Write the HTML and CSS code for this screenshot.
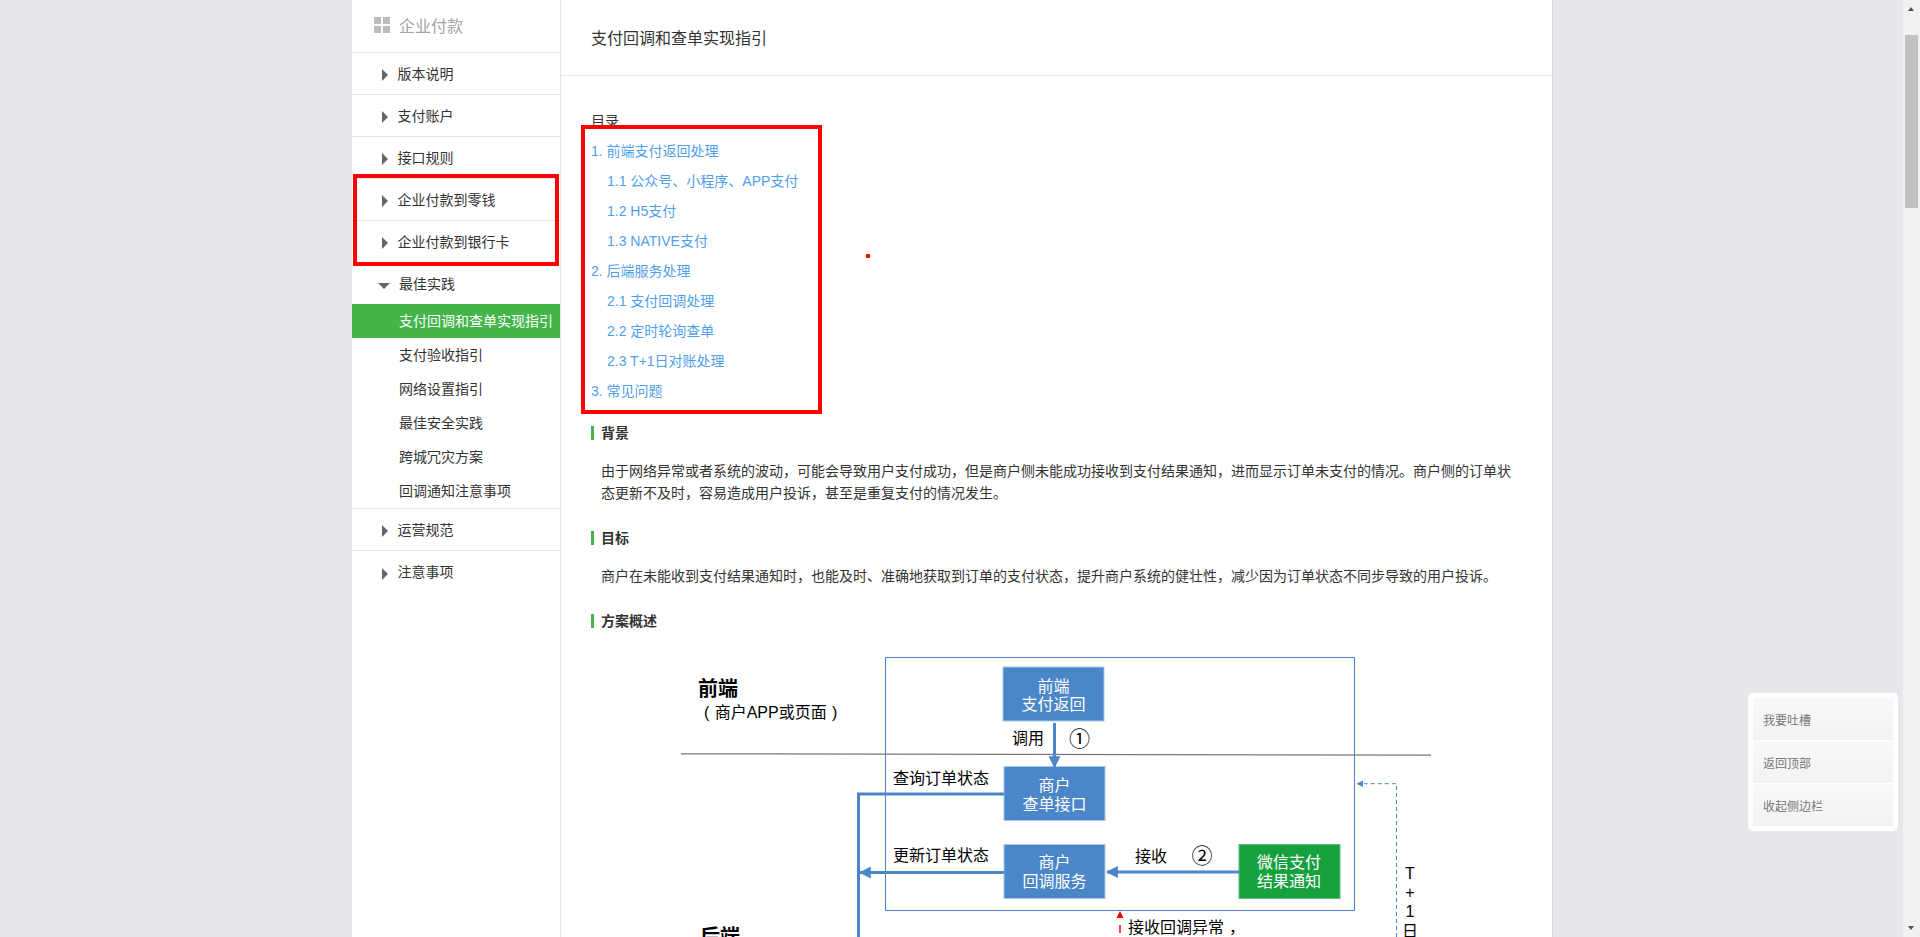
FILE: index.html
```html
<!DOCTYPE html>
<html lang="zh-CN">
<head>
<meta charset="utf-8">
<title>支付回调和查单实现指引</title>
<link rel="stylesheet" href="styles.css">
</head>
<body>
<div class="viewport">
  <div class="page">
    <aside class="side">
      <div class="side-head">
        <svg class="grid-icon" width="16" height="16" viewBox="0 0 16 16"><path d="M0 0h7v7H0zM9 0h7v7H9zM0 9h7v7H0zM9 9h7v7H9z"/></svg>
        <span>企业付款</span>
      </div>
      <div class="nav-item"><i class="tri-r"></i>版本说明</div>
      <div class="nav-item"><i class="tri-r"></i>支付账户</div>
      <div class="nav-item"><i class="tri-r"></i>接口规则</div>
      <div class="nav-item"><i class="tri-r"></i>企业付款到零钱</div>
      <div class="nav-item"><i class="tri-r"></i>企业付款到银行卡</div>
      <div class="nav-group">
        <div class="nav-open"><i class="tri-d"></i>最佳实践</div>
        <div class="sub active">支付回调和查单实现指引</div>
        <div class="sub">支付验收指引</div>
        <div class="sub">网络设置指引</div>
        <div class="sub">最佳安全实践</div>
        <div class="sub">跨城冗灾方案</div>
        <div class="sub">回调通知注意事项</div>
      </div>
      <div class="nav-item"><i class="tri-r"></i>运营规范</div>
      <div class="nav-item"><i class="tri-r"></i>注意事项</div>
    </aside>
    <main class="main">
      <h1 class="title">支付回调和查单实现指引</h1>
      <div class="body">
        <div class="toc-title">目录</div>
        <a class="toc">1. 前端支付返回处理</a>
        <a class="toc in">1.1 公众号、小程序、APP支付</a>
        <a class="toc in">1.2 H5支付</a>
        <a class="toc in">1.3 NATIVE支付</a>
        <a class="toc">2. 后端服务处理</a>
        <a class="toc in">2.1 支付回调处理</a>
        <a class="toc in">2.2 定时轮询查单</a>
        <a class="toc in">2.3 T+1日对账处理</a>
        <a class="toc">3. 常见问题</a>
        <h2 class="sec">背景</h2>
        <p class="para">由于网络异常或者系统的波动，可能会导致用户支付成功，但是商户侧未能成功接收到支付结果通知，进而显示订单未支付的情况。商户侧的订单状态更新不及时，容易造成用户投诉，甚至是重复支付的情况发生。</p>
        <h2 class="sec">目标</h2>
        <p class="para">商户在未能收到支付结果通知时，也能及时、准确地获取到订单的支付状态，提升商户系统的健壮性，减少因为订单状态不同步导致的用户投诉。</p>
        <h2 class="sec">方案概述</h2>
        <svg class="diagram" width="930" height="297" viewBox="591 640 930 297">
          <defs>
            <marker id="ah" markerWidth="4" markerHeight="4" refX="3.6" refY="2" orient="auto"><path d="M0 0L4 2L0 4z" fill="#4a86c8"/></marker>
          </defs>
          <rect class="outer" x="885.5" y="657.5" width="469" height="253"/>
          <path d="M681 753.8L1431 755.2" stroke="#777" stroke-width="1.2" fill="none"/>
          <rect class="box" x="1003" y="667" width="101" height="54"/>
          <rect class="box" x="1004" y="766.5" width="101" height="54"/>
          <rect class="box" x="1004" y="844.5" width="101" height="54"/>
          <rect class="box-g" x="1239" y="844.5" width="101" height="54"/>
          <path class="flow" d="M1054.5 723V767" marker-end="url(#ah)"/>
          <path class="flow" d="M1004 794H858.5V937"/>
          <path class="flow" d="M1004 872.5H860" marker-end="url(#ah)"/>
          <path class="flow" d="M1239 872H1107" marker-end="url(#ah)"/>
          <path d="M1120 911L1116.5 918H1123.5z" fill="#f00"/>
          <path d="M1120 925V933" stroke="#f00" stroke-width="1.5"/>
          <path d="M1396.5 937V783.7H1362" stroke="#4a86c8" stroke-width="1" stroke-dasharray="4 3" fill="none"/>
          <path d="M1356.5 783.7L1363 780.5V787z" fill="#4a86c8"/>
          <text class="t20" x="698" y="689">前端</text>
          <text class="t16" y="711.5"><tspan x="704">(</tspan><tspan x="714.7">商户APP或页面</tspan><tspan x="832">)</tspan></text>
          <text class="t20" x="700" y="937">后端</text>
          <text class="t16" x="1012" y="738">调用</text>
          <text class="t18" x="1079.5" y="738">①</text>
          <text class="t16" x="893" y="778">查询订单状态</text>
          <text class="t16" x="893" y="855">更新订单状态</text>
          <text class="t16" x="1135" y="856.5">接收</text>
          <text class="t18" x="1202" y="855">②</text>
          <text class="tw" x="1053.5" y="686">前端</text>
          <text class="tw" x="1053.5" y="704.5">支付返回</text>
          <text class="tw" x="1054.5" y="785">商户</text>
          <text class="tw" x="1054.5" y="804">查单接口</text>
          <text class="tw" x="1054.5" y="862.5">商户</text>
          <text class="tw" x="1054.5" y="881.5">回调服务</text>
          <text class="tw" x="1289" y="862.5">微信支付</text>
          <text class="tw" x="1289" y="881.5">结果通知</text>
          <text class="t16" x="1128" y="927">接收回调异常<tspan x="1229">，</tspan></text>
          <text class="tc" x="1410" y="873">T</text>
          <text class="tc" x="1410" y="892">+</text>
          <text class="tc" x="1410" y="911.5">1</text>
          <text class="tc" x="1410" y="931">日</text>
        </svg>
      </div>
    </main>
    <div class="mark mark-nav"></div>
    <div class="mark mark-toc"></div>
    <div class="dot"></div>
  </div>
  <div class="float">
    <div class="float-item">我要吐槽</div>
    <div class="float-item">返回顶部</div>
    <div class="float-item">收起侧边栏</div>
  </div>
</div>
<div class="sbar">
  <i class="sbar-up"></i>
  <i class="sbar-thumb"></i>
  <i class="sbar-down"></i>
</div>
</body>
</html>
```
FILE: styles.css
```css
* { box-sizing: border-box; }
html, body { margin: 0; height: 100%; overflow: hidden; }
body {
  display: flex;
  background: #e6e7eb;
  font-family: "Noto Sans CJK SC", "Liberation Sans", sans-serif;
  font-size: 14px;
  color: #333;
}
.viewport { position: relative; flex: 1; height: 937px; overflow: hidden; }
.page {
  position: relative;
  width: 1201px;
  height: 937px;
  margin-left: 352px;
  display: flex;
  background: #fff;
  border-right: 1px solid #d9dadc;
}
.side { width: 209px; flex: none; border-right: 1px solid #e4e6e9; }
.side-head {
  height: 53px;
  padding: 0 0 3px 22px;
  display: flex;
  align-items: center;
  gap: 9px;
  font-size: 16px;
  color: #a3a3a3;
  border-bottom: 1px solid #e7e7eb;
}
.grid-icon { fill: #bdbdbd; margin-top: 1px; }
.nav-item {
  height: 42px;
  display: flex;
  align-items: center;
  padding: 0 0 2px 30px;
  border-bottom: 1px solid #e7e7eb;
  color: #333;
}
.nav-item:last-child { border-bottom: 0; }
.tri-r {
  width: 0; height: 0;
  margin: 5px 9.5px 0 0;
  border-left: 6px solid #666;
  border-top: 6px solid transparent;
  border-bottom: 6px solid transparent;
}
.tri-d {
  position: absolute;
  left: 26px;
  top: 20px;
  width: 0; height: 0;
  border-top: 6px solid #666;
  border-left: 6px solid transparent;
  border-right: 6px solid transparent;
}
.nav-group { border-bottom: 1px solid #e7e7eb; }
.nav-open {
  position: relative;
  height: 41px;
  display: flex;
  align-items: center;
  padding: 0 0 2px 47px;
}
.sub {
  height: 34px;
  line-height: 32px;
  padding-left: 47px;
  color: #333;
}
.sub.active { background: #44b549; color: #fff; }
.main { flex: 1; min-width: 0; overflow: hidden; }
.title {
  margin: 0;
  height: 76px;
  padding: 0 0 0 30px;
  line-height: 75px;
  font-size: 16px;
  font-weight: 400;
  color: #333;
  border-bottom: 1px solid #e7e7eb;
}
.body { padding: 30px 0 0 30px; }
.toc-title { height: 30px; line-height: 28px; color: #333; }
.toc {
  display: block;
  height: 30px;
  line-height: 30px;
  font-family: "Liberation Sans", "Noto Sans CJK SC", sans-serif;
  color: #4f9fec;
}
.toc.in { padding-left: 16px; }
.sec {
  margin: 14.7px 0 0;
  height: 22px;
  line-height: 22px;
  padding-left: 10px;
  font-size: 14px;
  font-weight: 700;
  color: #333;
  position: relative;
}
.sec::before {
  content: "";
  position: absolute;
  left: 0;
  top: 5px;
  width: 3px;
  height: 14px;
  background: #44b549;
}
.para {
  margin: 16.3px 0 22px;
  padding: 0 31px 0 10px;
  line-height: 22.4px;
  color: #333;
}
.para + .sec { margin-top: 0; }
.diagram { display: block; margin-top: 9px; }
.diagram text { font-family: "Liberation Sans", "Noto Sans CJK SC", sans-serif; dominant-baseline: central; fill: #000; }
.outer { fill: none; stroke: #4a86c8; stroke-width: 1; }
.box { fill: #4a86c8; stroke: #a9c8e6; stroke-width: 1; }
.box-g { fill: #17a13e; stroke: #5fbf7c; stroke-width: 1; }
.flow { fill: none; stroke: #4a86c8; stroke-width: 3; }
.diagram .t20 { font-size: 20px; font-weight: 700; }
.diagram .t16 { font-size: 16px; }
.diagram .t18 { font-size: 21px; text-anchor: middle; }
.diagram .tw { font-size: 16px; fill: #fff; text-anchor: middle; }
.diagram .tc { font-size: 16px; text-anchor: middle; }
.mark { position: absolute; border: 4px solid #f00; pointer-events: none; }
.mark-nav { left: 1px; top: 174px; width: 206px; height: 92px; }
.mark-toc { left: 229px; top: 125px; width: 241px; height: 289px; }
.dot { position: absolute; left: 514px; top: 254px; width: 4px; height: 4px; background: #f00; border-radius: 1px; }
.float {
  position: absolute;
  left: 1748px;
  top: 693px;
  width: 150px;
  padding: 5px;
  background: #fff;
  border-radius: 5px;
}
.float-item {
  height: 43px;
  line-height: 43px;
  padding-left: 10px;
  font-size: 12px;
  color: #777;
  background: linear-gradient(#f9f9f9, #f2f2f2);
  border-bottom: 1px solid #fff;
}
.float-item:last-child { height: 42px; border-bottom: 0; }
.sbar {
  position: relative;
  width: 17px;
  flex: none;
  height: 937px;
  background: #f1f1f1;
}
.sbar-up, .sbar-down {
  position: absolute;
  left: 5px;
  width: 0; height: 0;
  border-left: 3.5px solid transparent;
  border-right: 3.5px solid transparent;
}
.sbar-up { top: 7px; border-bottom: 4px solid #505050; }
.sbar-down { bottom: 7px; border-top: 4px solid #505050; }
.sbar-thumb { position: absolute; left: 2px; top: 35px; width: 13px; height: 173px; background: #c1c1c1; }
```
